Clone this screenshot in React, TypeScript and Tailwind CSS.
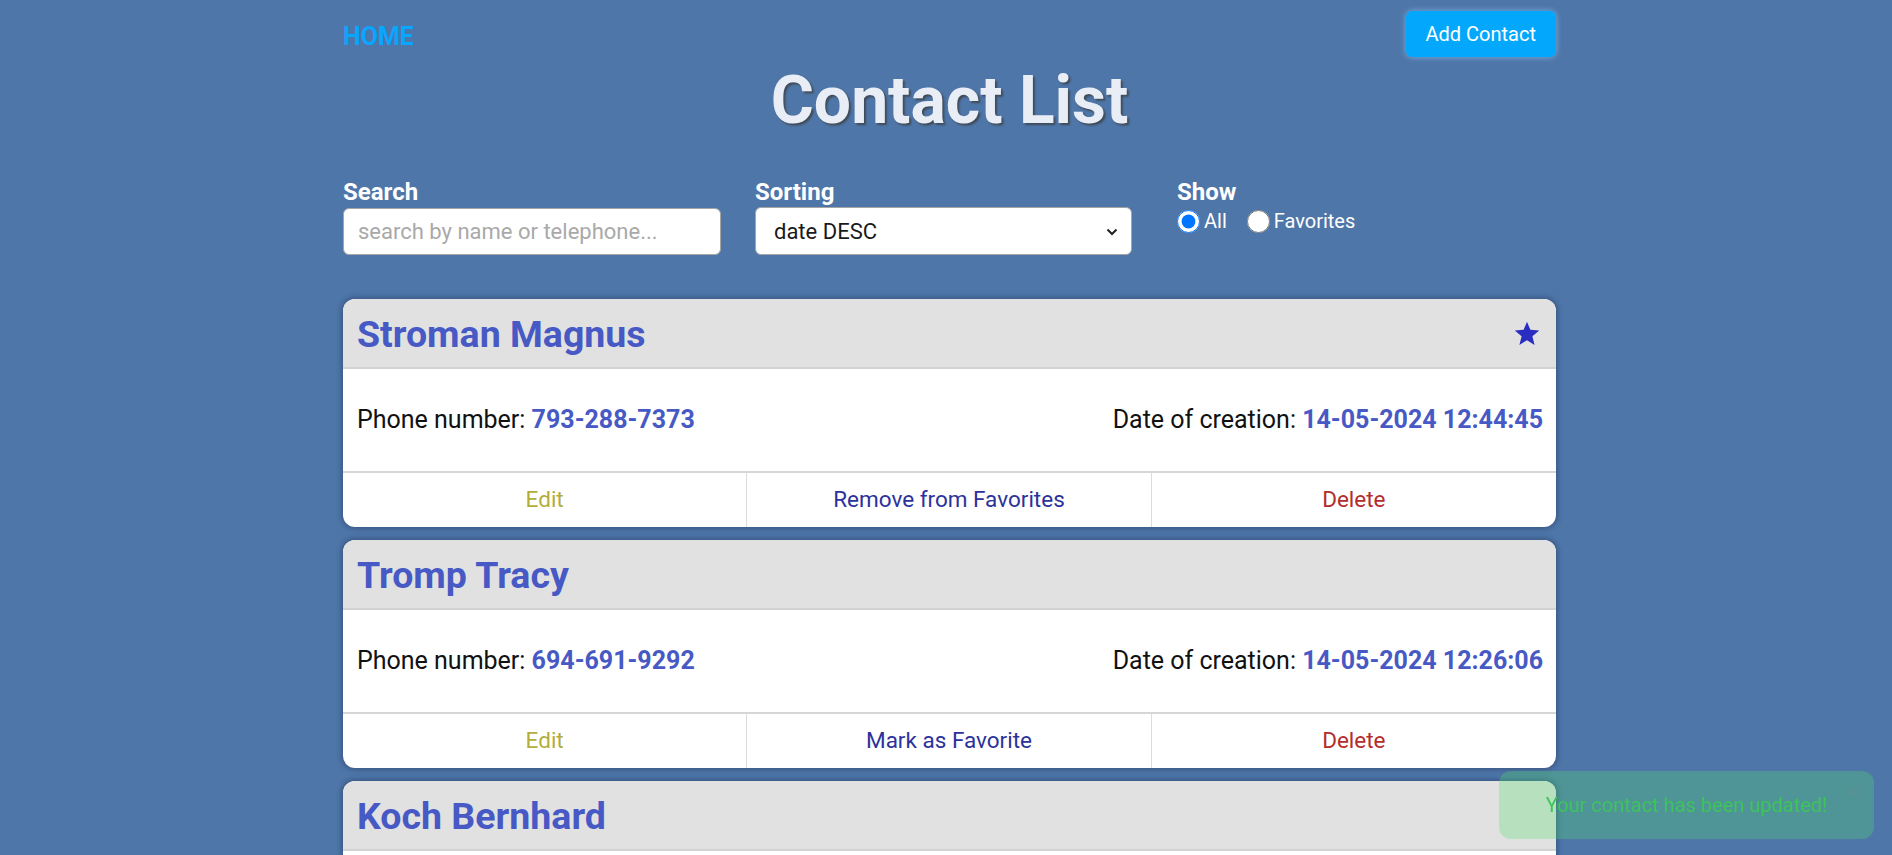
import React, { useState } from "react";

interface Contact {
  name: string;
  phone: string;
  date: string;
  favorite: boolean;
}

const contacts: Contact[] = [
  { name: "Stroman Magnus", phone: "793-288-7373", date: "14-05-2024 12:44:45", favorite: true },
  { name: "Tromp Tracy", phone: "694-691-9292", date: "14-05-2024 12:26:06", favorite: false },
  { name: "Koch Bernhard", phone: "532-803-4410", date: "14-05-2024 11:58:21", favorite: false },
];

const Star = () => (
  <svg width="26" height="26" viewBox="0 0 24 24" className="fill-[#2a2ec0]">
    <path d="M12 1.5l3.1 7.6 8.2.6-6.3 5.3 2 8-7-4.4-7 4.4 2-8L.7 9.7l8.2-.6z" />
  </svg>
);

const ContactCard: React.FC<{ contact: Contact }> = ({ contact }) => (
  <div className="rounded-[12px] bg-white overflow-hidden shadow-[0_0_5px_2px_rgba(35,55,95,0.45)]">
    <div className="h-[70px] bg-[#e1e1e1] border-b-2 border-[#d3d3d3] flex items-center justify-between pl-[14px] pr-[16px]">
      <h2 className="pt-[3px] text-[37.5px] font-bold text-[#4759c4] leading-none">{contact.name}</h2>
      {contact.favorite && <Star />}
    </div>
    <div className="h-[102px] flex items-center justify-between pl-[14px] pr-[13px] text-[25px] text-[#111]">
      <p>
        Phone number: <span className="font-bold text-[#4759c4]">{contact.phone}</span>
      </p>
      <p>
        Date of creation: <span className="font-bold text-[#4759c4]">{contact.date}</span>
      </p>
    </div>
    <div className="h-[56px] border-t-2 border-[#d6d6d6] grid grid-cols-3 text-[22.5px]">
      <button className="text-[#b3ad3b] border-r border-[#dcdcdc]">Edit</button>
      <button className="text-[#2c329c] border-r border-[#dcdcdc]">
        {contact.favorite ? "Remove from Favorites" : "Mark as Favorite"}
      </button>
      <button className="text-[#b42d2d]">Delete</button>
    </div>
  </div>
);

export default function App() {
  const [search, setSearch] = useState("");
  const [sort, setSort] = useState("date DESC");
  const [show, setShow] = useState("all");

  return (
    <div className="min-h-screen bg-[#4e76a8] font-['Roboto',sans-serif] flex justify-center pl-[7px] pb-[40px]">
      <div className="w-[1213px]">
        <div className="flex justify-between items-start pt-[11px]">
          <a href="#" className="mt-[12px] text-[25px] font-bold text-[#0aa5ff] leading-[28px]">
            HOME
          </a>
          <button className="h-[46px] px-[20px] rounded-[6px] bg-[#03a8fc] text-white text-[20px] shadow-[0_0_6px_rgba(140,200,255,0.7)]">
            Add Contact
          </button>
        </div>

        <h1 className="mt-[5px] text-center text-[66px] leading-[77px] font-bold text-[#e9eef6] [text-shadow:2px_2px_2px_rgba(60,60,60,0.75)]">
          Contact List
        </h1>

        <div className="mt-[39px] flex items-start">
          <div className="w-[378px]">
            <label className="block text-[24px] font-bold text-white leading-[28px] mb-[2px]">Search</label>
            <input
              value={search}
              onChange={(e) => setSearch(e.target.value)}
              placeholder="search by name or telephone..."
              className="w-full h-[47px] rounded-[6px] bg-white border border-[#a5a5a5] px-[14px] text-[22px] text-[#222] placeholder:text-[#a9a9a9] outline-none"
            />
          </div>
          <div className="w-[377px] ml-[34px]">
            <label className="block text-[24px] font-bold text-white leading-[28px] mb-[1px]">Sorting</label>
            <div className="relative">
              <select
                value={sort}
                onChange={(e) => setSort(e.target.value)}
                className="appearance-none w-full h-[48px] rounded-[6px] bg-white border border-[#a5a5a5] pl-[18px] text-[22px] text-[#1a1a1a] outline-none"
              >
                <option>date DESC</option>
                <option>date ASC</option>
                <option>name ASC</option>
                <option>name DESC</option>
              </select>
              <svg
                width="12"
                height="8"
                viewBox="0 0 12 8"
                className="absolute right-[14px] top-[21px] pointer-events-none"
              >
                <path d="M1.5 1.5L6 6l4.5-4.5" stroke="#222" strokeWidth="2" fill="none" />
              </svg>
            </div>
          </div>
          <div className="ml-[45px]">
            <label className="block text-[24px] font-bold text-white leading-[28px]">Show</label>
            <div className="flex items-center text-[20px] text-white">
              <label className="flex items-center">
                <input
                  type="radio"
                  name="show"
                  checked={show === "all"}
                  onChange={() => setShow("all")}
                  className="w-[23px] h-[23px] m-0 accent-[#0075ff]"
                />
                <span className="ml-[4px]">All</span>
              </label>
              <label className="flex items-center ml-[20px]">
                <input
                  type="radio"
                  name="show"
                  checked={show === "favorites"}
                  onChange={() => setShow("favorites")}
                  className="w-[23px] h-[23px] m-0"
                />
                <span className="ml-[4px]">Favorites</span>
              </label>
            </div>
          </div>
        </div>

        <div className="mt-[44px] flex flex-col gap-[13px]">
          {contacts.map((c) => (
            <ContactCard key={c.name} contact={c} />
          ))}
        </div>
      </div>

      <div className="fixed right-[18px] bottom-[16px] w-[375px] h-[68px] rounded-[12px] bg-[rgba(81,224,107,0.29)] flex items-center justify-center text-[20px] text-[#3ec45c]">
        Your contact has been updated!
        <span className="absolute top-[10px] right-[14px] text-[22px] leading-none text-[rgba(120,140,140,0.35)]">×</span>
      </div>
    </div>
  );
}
